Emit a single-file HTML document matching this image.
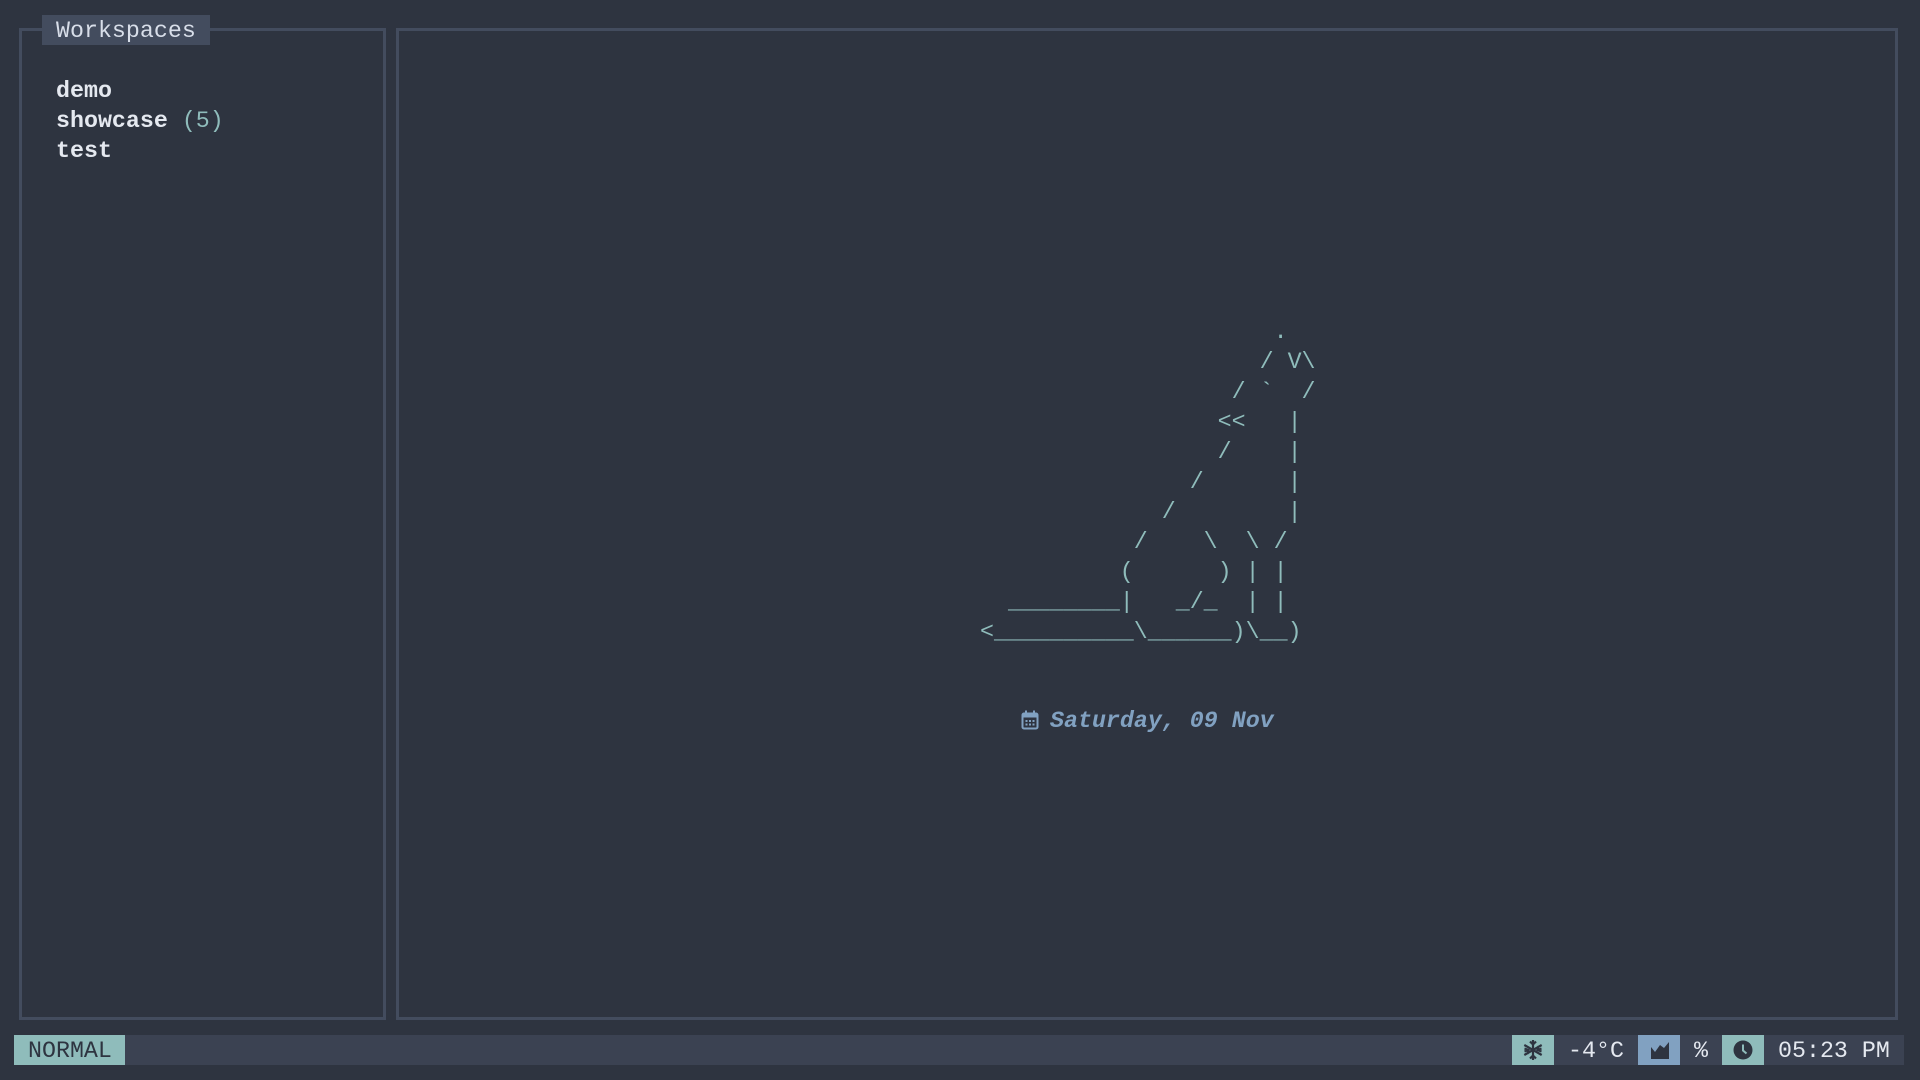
<!DOCTYPE html>
<html><head><meta charset="utf-8"><style>
*{margin:0;padding:0;box-sizing:border-box}
body{width:1920px;height:1080px;background:#2e3440;position:relative;overflow:hidden;font-family:"Liberation Mono","DejaVu Sans Mono",monospace;font-size:23.3px;line-height:30px;color:#e5e9f0}
.box{position:absolute;border:3px solid #434c5e}
.abs{position:absolute;white-space:pre}
pre{position:absolute;font:inherit;line-height:30px;color:#8fbcbb;margin:0}
.seg{position:absolute;top:1035px;height:30px}
.t{padding-top:1px}
</style></head><body>
<div class="box" style="left:19px;top:28px;width:367px;height:992px"></div>
<div class="box" style="left:396px;top:28px;width:1502px;height:992px"></div>
<div class="abs" style="left:42px;top:15px;width:168px;height:30px;background:#434c5e;padding-left:14px;padding-top:1px;color:#d8dee9">Workspaces</div>
<div class="abs" style="left:56px;top:76px;font-weight:bold">demo
showcase <span style="color:#8fbcbb;font-weight:normal">(5)</span>
test</div>
<pre style="left:980px;top:317px">                     .
                    / V\
                  / `  /
                 &lt;&lt;   |
                 /    |
               /      |
             /        |
           /    \  \ /
          (      ) | |
  ________|   _/_  | |
&lt;__________\______)\__)</pre>
<svg style="position:absolute;left:1021px;top:710px" width="18" height="20" viewBox="0 0 18 20"><rect x="1.5" y="3.5" width="15" height="15" rx="1.5" fill="none" stroke="#81a1c1" stroke-width="2"/><rect x="1.5" y="3.5" width="15" height="4" fill="#81a1c1"/><rect x="4" y="0.5" width="2" height="4" fill="#81a1c1"/><rect x="12" y="0.5" width="2" height="4" fill="#81a1c1"/><g fill="#81a1c1"><rect x="4.5" y="10" width="2" height="2"/><rect x="8" y="10" width="2" height="2"/><rect x="11.5" y="10" width="2" height="2"/><rect x="4.5" y="13.5" width="2" height="2"/><rect x="8" y="13.5" width="2" height="2"/><rect x="11.5" y="13.5" width="2" height="2"/></g></svg>
<div class="abs" style="left:1050px;top:706px;color:#81a1c1;font-weight:bold;font-style:italic">Saturday, 09 Nov</div>
<div class="seg" style="left:14px;width:1890px;background:#3b4252"></div>
<div class="seg abs t" style="left:14px;width:111px;background:#8fbcbb;color:#2e3440;padding-left:14px">NORMAL</div>
<div class="seg" style="left:1512px;width:42px;background:#8fbcbb"><svg style="position:absolute;left:10px;top:4px" width="22" height="22" viewBox="0 0 22 22" stroke="#2e3440" stroke-width="2.2" fill="none"><path d="M11 1v20M2.3 6l17.4 10M2.3 16l17.4-10M8 2.5l3 3 3-3M8 19.5l3-3 3 3M2.5 9.5l4 1.5-1 4M19.5 12.5l-4-1.5 1-4M2.5 12.5l4-1.5M19.5 9.5l-4 1.5"/></svg></div>
<div class="seg abs t" style="left:1568px;color:#e5e9f0">-4°C</div>
<div class="seg" style="left:1638px;width:42px;background:#81a1c1"><svg style="position:absolute;left:12px;top:6px" width="20" height="18" viewBox="0 0 20 18"><path d="M1 1v16h18v-16l-5 6-4-3-5 7-4-5z" fill="#2e3440"/><path d="M1 17h18" stroke="#2e3440" stroke-width="2"/></svg></div>
<div class="seg abs t" style="left:1694px;color:#e5e9f0">%</div>
<div class="seg" style="left:1722px;width:42px;background:#8fbcbb"><svg style="position:absolute;left:11px;top:5px" width="20" height="20" viewBox="0 0 20 20"><circle cx="10" cy="10" r="9.5" fill="#2e3440"/><path d="M10 4.5v6l3.5 3" stroke="#8fbcbb" stroke-width="2" fill="none"/></svg></div>
<div class="seg abs t" style="left:1778px;color:#e5e9f0">05:23 PM</div>
</body></html>
